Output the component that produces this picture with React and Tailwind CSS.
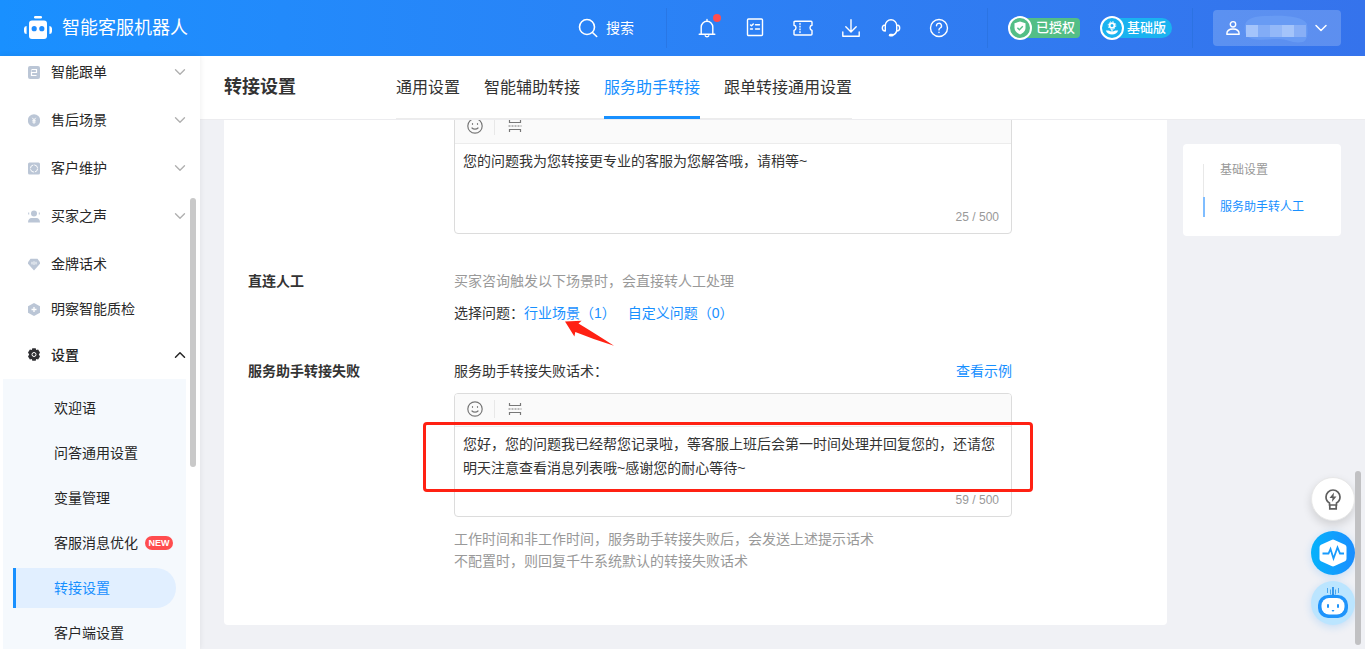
import React, { useState } from "react";
import { ChevronDown, ChevronUp } from "lucide-react";

const line = {
  fill: "none",
  stroke: "currentColor",
  strokeWidth: 1.4,
  strokeLinecap: "round",
  strokeLinejoin: "round",
};

const Logo = () => (
  <svg viewBox="0 0 28 24" className="w-7 h-6" fill="#fff">
    <rect x="10" y="0" width="8" height="2.400" rx="1.200" />
    <path d="M8 4.500h12a3 3 0 0 1 3 3v12.500a3 3 0 0 1-3 3H8a3 3 0 0 1-3-3v-12.500a3 3 0 0 1 3-3Z" />
    <path d="M2.600 10v8A2.600 2.600 0 0 1 0 15.500v-3A2.600 2.600 0 0 1 2.600 10ZM25.400 10v8a2.600 2.600 0 0 0 2.600-2.500v-3a2.600 2.600 0 0 0-2.600-2.500Z" />
    <circle cx="10.200" cy="12.700" r="2.600" fill="#1e8cfe" />
    <circle cx="17.800" cy="12.700" r="2.600" fill="#1e8cfe" />
  </svg>
);

const BellIcon = () => (
  <svg viewBox="0 0 20 20" className="w-5 h-5" {...line}>
    <path d="M4.200 16V9a5.800 5.800 0 0 1 11.600 0v7M2.200 16.200h15.600M10 1.500v1.500M8.200 17.800a1.900 1.500 0 0 0 3.600 0" />
  </svg>
);

const ListIcon = () => (
  <svg viewBox="0 0 20 20" className="w-5 h-5" {...line}>
    <rect x="2.500" y="1" width="15" height="16.500" rx="1" />
    <path d="M5.500 6.900l1 .9 1.800-1.900M10.500 6.800h4M5.500 11h2M10.500 11h4" />
  </svg>
);

const TicketIcon = () => (
  <svg viewBox="0 0 20 20" className="w-5 h-5" {...line}>
    <path d="M2 3.200h16q1 0 1 1v3c-1.500.3-2 1.300-2 2.600s.5 2.300 2 2.600v3.600q0 1-1 1H2q-1 0-1-1v-3.600c1.500-.3 2-1.300 2-2.600s-.5-2.300-2-2.600v-3q0-1 1-1Z" />
    <path d="M7 5.500v.8M7 8.300v.8M7 11v.8M7 13.800v.8" />
  </svg>
);

const DownloadIcon = () => (
  <svg viewBox="0 0 20 20" className="w-5 h-5" {...line}>
    <path d="M10 1.800v12M4.800 8.800l5.200 5.200 5.200-5.200M1.800 14v4.200h16.400V14" />
  </svg>
);

const HeadsetIcon = () => (
  <svg viewBox="0 0 20 20" className="w-5 h-5" {...line}>
    <path d="M4.300 13V7.500a5.700 5.700 0 0 1 11.400 0V13M4.300 7C2.500 7 1.300 8.200 1.300 10s1.200 3 3 3M15.700 7c1.800 0 3 1.200 3 3s-1.200 3-3 3c-.6 2.300-2 3.700-4.200 4.200" />
    <path d="M9.300 17.200h1.700" strokeWidth="2.800" />
  </svg>
);

const HelpIcon = () => (
  <svg viewBox="0 0 20 20" className="w-5 h-5" {...line}>
    <circle cx="10" cy="10" r="8.500" />
    <path d="M7.500 7.800a2.500 2.500 0 1 1 3.700 2.200c-.9.500-1.200.9-1.200 1.900M10 14.200v.3" />
  </svg>
);

const tools = [
  { name: "消息", Icon: BellIcon, width: "w-12", dot: true },
  { name: "任务", Icon: ListIcon, width: "w-12" },
  { name: "卡券", Icon: TicketIcon, width: "w-12" },
  { name: "下载", Icon: DownloadIcon, width: "w-12" },
  { name: "客服", Icon: HeadsetIcon, width: "w-8" },
  { name: "帮助", Icon: HelpIcon, width: "w-16" },
];

const Divider = () => <span className="w-px h-10 bg-[#2870da]/60" />;

const Header = () => (
  <header className="h-14 shrink-0 flex items-center px-6 text-white bg-linear-to-r from-[#1990ff] to-[#3573ec]">
    <Logo />
    <h1 className="ml-[10px] text-lg leading-6">智能客服机器人</h1>

    <div className="ml-auto flex items-center">
      <button className="flex items-center gap-2 mr-8 text-sm">
        <svg viewBox="0 0 20 20" className="w-5 h-5" {...line} strokeWidth="1.600">
          <circle cx="9" cy="9" r="7.500" />
          <path d="M14.500 14.500l4.200 4" />
        </svg>
        搜索
      </button>
      <Divider />
      <div className="flex mx-4">
        {tools.map(({ name, Icon, width, dot }) => (
          <button
            key={name}
            aria-label={name}
            className={`${width} h-8 flex items-center justify-center`}
          >
            <span className="relative">
              <Icon />
              {dot && (
                <span className="absolute -top-1 -right-1 w-2 h-2 rounded-full bg-[#ff4d4f]" />
              )}
            </span>
          </button>
        ))}
      </div>
      <Divider />

      {/* Licence badges */}
      <div className="flex gap-5 mx-5 text-[13px] font-medium">
        <span className="flex items-center w-[72px]">
          <span className="relative z-10 w-6 h-6 shrink-0 rounded-full border-2 border-white bg-[#53be86] flex items-center justify-center">
            <svg viewBox="0 0 14 14" className="w-[14px] h-[14px]">
              <path d="M7 .5l5.500 1.800v4.500c0 3.200-2.500 5.500-5.500 6.700-3-1.200-5.500-3.500-5.500-6.700V2.300L7 .5Z" fill="#fff" />
              <path d="M4.400 6.700l2 2 3.400-3.400" fill="none" stroke="#53be86" strokeWidth="1.400" />
            </svg>
          </span>
          <span className="-ml-2 flex-1 h-5 pl-3 rounded-r bg-[#53be86] leading-5 whitespace-nowrap">
            已授权
          </span>
        </span>
        <span className="flex items-center w-[72px]">
          <span className="relative z-10 w-6 h-6 shrink-0 rounded-full border-2 border-white bg-[#1ab3f0] flex items-center justify-center">
            <svg viewBox="0 0 14 14" className="w-[14px] h-[14px]">
              <circle cx="7" cy="4.500" r="2.400" fill="none" stroke="#fff" strokeWidth="1.800" />
              <circle cx="7" cy="4.500" r="3.800" fill="none" stroke="#fff" strokeWidth="1" strokeDasharray="1.500 1.480" />
              <path d="M7 8v3" stroke="#fff" strokeWidth="1.200" />
              <path d="M.8 9.500c2.200-.3 4.800.1 6.200 1.500 1.400-1.400 4-1.800 6.200-1.500-1 2.600-3.200 4-6.200 4S1.800 12.100.8 9.500Z" fill="#fff" />
            </svg>
          </span>
          <span className="-ml-2 flex-1 h-5 pl-[11px] rounded-r-full bg-[#1ab3f0] leading-5 whitespace-nowrap">
            基础版
          </span>
        </span>
      </div>
      <Divider />

      <button
        aria-label="账号"
        className="ml-5 w-32 h-9 pl-3 pr-[10px] rounded bg-white/20 flex items-center justify-between"
      >
        <svg viewBox="0 0 16 16" className="w-4 h-4" {...line}>
          <circle cx="8" cy="4.300" r="2.700" />
          <path d="M1.800 14.200c0-3.400 2.200-5.200 6.200-5.200s6.200 1.800 6.200 5.200Z" />
        </svg>
        <svg viewBox="0 0 66 30" className="w-[66px] h-[30px]">
          <path d="M2 12C4 4 14 3 26 3c14-1 34 0 38 8 1 8 1 16-4 18-10 2-16-3-24-3-12 0-26 3-32-3-2-3-3-7-2-11Z" fill="#689bf4" />
          <rect x="3" y="12" width="12" height="12" fill="#a4c4fb" />
          <rect x="15" y="12" width="12" height="12" fill="#82acf6" />
          <rect x="27" y="12" width="12" height="12" fill="#93b8f8" />
          <rect x="39" y="12" width="12" height="12" fill="#a4c4fa" />
          <rect x="51" y="12" width="12" height="12" fill="#88aff6" />
        </svg>
        <ChevronDown size={20} strokeWidth={1.8} />
      </button>
    </div>
  </header>
);

const menu = [
  {
    name: "智能跟单",
    more: true,
    icon: (
      <>
        <rect width="12" height="13" rx="2" />
        <path d="M3.500 3.500h5v3h-5v3h5M3 5h1" fill="none" stroke="#fff" strokeWidth="1.200" />
      </>
    ),
  },
  {
    name: "售后场景",
    more: true,
    icon: (
      <>
        <circle cx="6" cy="6.500" r="6.200" />
        <path d="M4.300 3.800L6 5.800l1.700-2M6 5.800v4M4.300 6.300h3.400M4.300 8h3.400" fill="none" stroke="#fff" />
      </>
    ),
  },
  {
    name: "客户维护",
    more: true,
    icon: (
      <>
        <rect y=".5" width="12" height="12" rx="1.500" />
        <circle cx="6" cy="6.500" r="3.600" fill="none" stroke="#fff" strokeDasharray="4.600 1" />
      </>
    ),
  },
  {
    name: "买家之声",
    more: true,
    icon: (
      <>
        <circle cx="6" cy="3.500" r="3" />
        <path d="M0 12.500c0-3 1.500-4.500 3.500-4.500h5c2 0 3.500 1.500 3.500 4.500ZM.2 2.500h1v2h-1ZM10.800 2.500h1v2h-1Z" />
      </>
    ),
  },
  {
    name: "金牌话术",
    icon: (
      <>
        <path d="M2.500.8h7L12 4.200v1.600L6 12.500 0 5.800V4.200Z" />
        <path d="M4 3.800v2.600M6 3.300v3.600M8 3.800v2.600" fill="none" stroke="#fff" strokeWidth=".9" />
      </>
    ),
  },
  {
    name: "明察智能质检",
    short: true,
    icon: (
      <>
        <path d="M6 0l6 3.200v6.600L6 13 0 9.800V3.200Z" />
        <path d="M6 4v5M3.500 6.500h5" fill="none" stroke="#fff" strokeWidth="1.300" />
      </>
    ),
  },
];

const subMenu = ["欢迎语", "问答通用设置", "变量管理", "客服消息优化", "转接设置", "客户端设置"];

const Sidebar = () => (
  <aside className="relative z-10 w-50 shrink-0 bg-white overflow-hidden text-sm text-[#262626] shadow-[0_0_6px_rgba(0,0,0,0.08)]">
    <nav className="-mt-2">
      {menu.map((item) => (
        <a
          key={item.name}
          href="#"
          className={`${item.short ? "h-[42px]" : "h-12"} pl-7 pr-[11px] flex items-center`}
        >
          <svg viewBox="0 0 12 13" className="w-3 h-[13px] mr-[11px]" fill="#bbc6d6">
            {item.icon}
          </svg>
          {item.name}
          {item.more && <ChevronDown size={18} strokeWidth={1.8} className="ml-auto text-[#b0b0b0]" />}
        </a>
      ))}
      <a href="#" className="h-[49px] pl-7 pr-[11px] flex items-center font-medium">
        <svg viewBox="0 0 12 13" className="w-3 h-[13px] mr-[11px]">
          <path d="M4.300.3h3.400l.5 1.700 1.900-.5L12 4.500 10.800 6.500 12 8.500l-1.900 3-1.900-.5-.5 1.700H4.300L3.800 11l-1.900.5L0 8.500l1.200-2L0 4.500l1.900-3 1.900.5Z" fill="#2f2f33" />
          <circle cx="6" cy="6.500" r="2" fill="none" stroke="#fff" />
        </svg>
        设置
        <ChevronUp size={18} strokeWidth={2} className="ml-auto" />
      </a>
      <div className="ml-[3px] mr-[14px] px-[10px] pt-[9px] pb-4 flex flex-col gap-[5px] bg-[#f5f9fd]">
        {subMenu.map((name) => (
          <a
            key={name}
            href="#"
            className={`h-10 pl-[38px] flex items-center border-l-3 rounded-r-full ${
              name === "转接设置"
                ? "border-[#1890ff] bg-[#e1efff] text-[#1890ff]"
                : "border-transparent"
            }`}
          >
            {name}
            {name === "客服消息优化" && (
              <span className="ml-[7px] w-7 h-[14px] rounded-full bg-[#ff4d4f] text-white text-[9px] leading-[14px] font-bold text-center">
                NEW
              </span>
            )}
          </a>
        ))}
      </div>
    </nav>
    <span className="absolute right-1 top-[142px] w-[6px] h-[269px] rounded-full bg-[#c9c9c9]" />
  </aside>
);

const Editor = ({ id, value, count, label, children }) => {
  const [text, setText] = useState(value);

  return (
    <div className="relative">
      <div className="border border-[#dcdcdc] rounded bg-white overflow-hidden">
        <div className="h-[33px] pb-[2px] flex items-center bg-[#fafafa] border-b border-[#ececec] text-[#777]">
          <button aria-label="表情" className="w-10 h-[18px] flex items-center justify-center border-r border-[#e8e8e8]">
            <svg viewBox="0 0 16 16" className="w-4 h-4" {...line} strokeWidth="1.200">
              <circle cx="8" cy="8" r="7.200" />
              <path d="M5.500 5.500v.8M10.500 5.500v.8M5 10c1.500 1.600 4.500 1.600 6 0" />
            </svg>
          </button>
          <button aria-label="分段" className="w-10 h-[18px] flex items-center justify-center">
            <svg viewBox="0 0 14 14" className="w-[14px] h-[14px]" fill="none" stroke="currentColor" strokeWidth="1.200">
              <path d="M1.500 1v2.500h11V1M1.500 13v-2.500h11V13" />
              <path d="M.5 7h13" strokeDasharray="2 1" />
            </svg>
          </button>
        </div>
        <textarea
          id={id}
          aria-label={label}
          value={text}
          onChange={(e) => setText(e.target.value)}
          className="block w-full h-[63px] px-2 pt-[5px] leading-6 resize-none outline-none overflow-hidden"
        />
        <div className="h-[26px] pr-3 text-right text-xs leading-5 text-[#999]">{count} / 500</div>
      </div>
      {children}
    </div>
  );
};

const Row = ({ title, children }) => (
  <section className="flex mb-9 leading-[22px]">
    <h3 className="w-[206px] shrink-0 font-bold">{title}</h3>
    <div className="w-full max-w-[558px] min-w-0">{children}</div>
  </section>
);

const tabs = ["通用设置", "智能辅助转接", "服务助手转接", "跟单转接通用设置"];

const FloatButtons = () => (
  <div className="absolute right-[10px] bottom-6 flex flex-col">
    <button
      aria-label="建议"
      className="w-11 h-11 rounded-full bg-white border border-[#e8e8e8] flex items-center justify-center shadow-[0_4px_10px_rgba(0,0,0,0.14)]"
    >
      <svg viewBox="0 0 16 21" className="w-4 h-[21px]" fill="none" stroke="#5f5f5f" strokeWidth="1.700">
        <path d="M4.500 16v-2C2.300 12.800 1 10.600 1 8a7 7 0 0 1 14 0c0 2.600-1.300 4.800-3.500 6v2ZM4.800 16v3.800h6.400V16" />
        <path d="M9 3.500L4.500 9h3l-.6 4 4.600-5.500h-3Z" fill="#5f5f5f" stroke="none" />
      </svg>
    </button>
    <button
      aria-label="诊断"
      className="mt-[10px] w-11 h-11 rounded-full bg-linear-to-r from-[#05b2fb] to-[#1a8dff] flex items-center justify-center shadow-[0_2px_8px_rgba(24,144,255,0.2)]"
    >
      <svg viewBox="0 0 28 28" className="w-7 h-7">
        <path d="M12.500 1q1.500-.8 3 0l10.500 4.800q1.500.8 1.500 2.400v11.600q0 1.600-1.500 2.400L15.500 27q-1.500.8-3 0L2 22.200q-1.500-.8-1.500-2.400V8.200q0-1.600 1.500-2.400Z" fill="#fff" />
        <path d="M3.500 14.500h6l2-4.500 3 9.500 4-11 2.500 6h4" fill="none" stroke="#189bfd" strokeWidth="1.800" />
      </svg>
    </button>
    <button
      aria-label="智能助手"
      className="mt-[6px] w-11 h-11 rounded-full bg-[#bbe5ff] flex items-center justify-center shadow-[0_2px_8px_rgba(24,144,255,0.2)]"
    >
      <svg viewBox="0 0 32 32" className="w-8 h-8">
        <path d="M10.500 1v5M13.500 2.500v5M18.500 2.500v5M21.500 1v5" stroke="#4ba7ee" strokeWidth="1" />
        <path d="M16 0v9" stroke="#1685e8" strokeWidth="1.600" />
        <path d="M11 9q5-3 10 0Z" fill="#1685e8" />
        <rect x="1" y="8" width="30" height="23" rx="10" fill="#1f94fb" />
        <rect x="4.500" y="11" width="23" height="16.500" rx="7.500" fill="#fff" />
        <rect x="10" y="17" width="2" height="4" rx="1" fill="#1f94fb" />
        <rect x="20" y="17" width="2" height="4" rx="1" fill="#1f94fb" />
        <path d="M14.500 23h3L16 25Z" fill="#1f94fb" />
      </svg>
    </button>
  </div>
);

export default function App() {
  return (
    <div className="relative h-screen flex flex-col overflow-hidden bg-[#f0f1f5] text-[#333] font-['Liberation_Sans','Noto_Sans_CJK_SC',sans-serif]">
      <Header />
      <div className="flex-1 min-h-0 flex">
        <Sidebar />

        <main className="flex-1 min-w-0 flex flex-col">
          <div className="h-16 shrink-0 pl-6 flex items-start bg-white border-b border-[#ececef]">
            <h2 className="text-lg leading-[63px] font-bold">转接设置</h2>
            <div className="ml-25 flex gap-6 text-base border-b border-[#ececec]">
              {tabs.map((tab) => (
                <a
                  key={tab}
                  href="#"
                  className={`h-[63px] leading-[63px] -mb-px border-b-3 ${
                    tab === "服务助手转接" ? "text-[#1890ff] border-[#1890ff]" : "border-transparent"
                  }`}
                >
                  {tab}
                </a>
              ))}
            </div>
          </div>

          <div className="flex-1 min-h-0 overflow-hidden px-6 flex items-start gap-4 text-sm">
            <div className="flex-1 min-w-0 -mt-[10px] px-6 pb-[17px] bg-white rounded-b">
              <Row title="">
                <Editor id="transfer-tip" label="转接话术" value="您的问题我为您转接更专业的客服为您解答哦，请稍等~" count={25} />
              </Row>

              <Row title="直连人工">
                <p className="text-[#999]">买家咨询触发以下场景时，会直接转人工处理</p>
                <div className="relative mt-[10px] flex">
                  <span>选择问题：</span>
                  <a href="#" className="text-[#1890ff]">行业场景（1）</a>
                  <a href="#" className="ml-3 text-[#1890ff]">自定义问题（0）</a>
                  <svg viewBox="0 0 50 26" className="absolute left-[111px] top-[18px] w-[50px] h-[26px]">
                    <path d="M0 1.500L16.600.7 13.500 3.500Q26 11 49 25.700 30 20 10.300 12L9.400 16.500Z" fill="#ff2113" />
                  </svg>
                </div>
              </Row>

              <Row title="服务助手转接失败">
                <div className="flex justify-between mb-[11px]">
                  <label htmlFor="fail-tip">服务助手转接失败话术：</label>
                  <a href="#" className="text-[#1890ff]">查看示例</a>
                </div>
                <Editor
                  id="fail-tip"
                  value="您好，您的问题我已经帮您记录啦，等客服上班后会第一时间处理并回复您的，还请您明天注意查看消息列表哦~感谢您的耐心等待~"
                  count={59}
                >
                  <span className="absolute -left-[31px] -right-[21px] top-[29px] h-[70px] border-3 border-[#ff2113] rounded pointer-events-none" />
                </Editor>
                <p className="mt-[11px] text-[#999]">
                  工作时间和非工作时间，服务助手转接失败后，会发送上述提示话术
                  <br />
                  不配置时，则回复千牛系统默认的转接失败话术
                </p>
              </Row>
            </div>

            <ul className="w-[158px] shrink-0 mt-6 px-5 pt-5 pb-[19px] bg-white rounded text-xs leading-3">
              <li className="h-[33px] pl-4 border-l border-[#e8e8e8]">
                <a href="#" className="text-[#999]">基础设置</a>
              </li>
              <li className="h-5 pl-[15px] flex items-center border-l-2 border-[#7fbdff]">
                <a href="#" className="text-[#1890ff]">服务助手转人工</a>
              </li>
            </ul>
          </div>
        </main>
      </div>

      <FloatButtons />
      <span className="absolute right-1 bottom-1 w-[6px] h-[174px] rounded-full bg-[#c1c1c3]" />
    </div>
  );
}
